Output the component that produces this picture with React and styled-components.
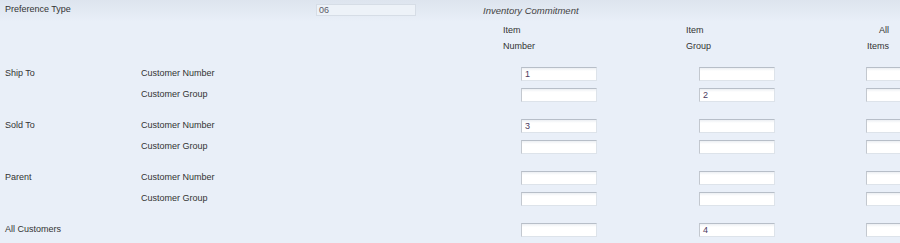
import React from "react";
import styled, { createGlobalStyle } from "styled-components";

const GlobalStyle = createGlobalStyle`
  html, body {
    margin: 0;
    padding: 0;
    background: #e9eff8;
  }
  body {
    font-family: "Liberation Sans", Arial, sans-serif;
    font-size: 9px;
    color: #333333;
  }
`;

const Page = styled.div`
  width: 900px;
  height: 243px;
  overflow: hidden;
  padding-left: 5px;
  box-sizing: border-box;
  background: linear-gradient(#dde4ee 0px, #e9eff8 22px, #e9eff8 100%);
`;

const TopRow = styled.div`
  display: flex;
  align-items: flex-start;
  height: 22px;
`;

const TypeLabel = styled.div`
  width: 311px;
  line-height: 12px;
  margin-top: 3px;
`;

const ReadOnlyBox = styled.div`
  width: 100px;
  height: 12px;
  margin-top: 4px;
  box-sizing: border-box;
  border: 1px solid #d6dde6;
  background: #edf2f8;
  color: #5a5a66;
  line-height: 10px;
  padding-left: 2px;
`;

const Caption = styled.div`
  margin-left: 67px;
  margin-top: 5px;
  line-height: 12px;
  font-size: 9.5px;
  font-style: italic;
  color: #444;
`;

const HeadRow = styled.div`
  display: grid;
  grid-template-columns: 498px 183px 177px 26px;
  margin-bottom: 13px;
`;

const Head = styled.div`
  grid-column: ${({ $col }) => $col};
  line-height: 16px;
  text-align: ${({ $align }) => $align || "left"};
`;

const Group = styled.div`
  display: flex;
  flex-direction: column;
  margin-bottom: 10px;
`;

const Row = styled.div`
  display: grid;
  grid-template-columns: 136px 380px 178px 167px 40px;
  height: 21px;
  align-items: start;
`;

const Label = styled.div`
  line-height: 12px;
`;

const Field = styled.div`
  width: 76px;
  height: 14px;
  box-sizing: border-box;
  border-top: 1px solid #b7bec8;
  border-left: 1px solid #c3c8cf;
  border-right: 1px solid #dde3ea;
  border-bottom: 1px solid #dde3ea;
  background: linear-gradient(#eceff3 0px, #ffffff 3px);
  color: #4c3a5e;
  line-height: 12px;
  padding-left: 3px;
`;

const groups = [
  { name: "Ship To", rows: [["Customer Number", "1", "", ""], ["Customer Group", "", "2", ""]] },
  { name: "Sold To", rows: [["Customer Number", "3", "", ""], ["Customer Group", "", "", ""]] },
  { name: "Parent", rows: [["Customer Number", "", "", ""], ["Customer Group", "", "", ""]] },
  { name: "All Customers", rows: [["", "", "4", ""]] },
];

export default function App() {
  return (
    <>
      <GlobalStyle />
      <Page>
        <TopRow>
          <TypeLabel>Preference Type</TypeLabel>
          <ReadOnlyBox>06</ReadOnlyBox>
          <Caption>Inventory Commitment</Caption>
        </TopRow>
        <HeadRow>
          <Head $col={2}>Item<br />Number</Head>
          <Head $col={3}>Item<br />Group</Head>
          <Head $col={4} $align="right">All<br />Items</Head>
        </HeadRow>
        {groups.map((g) => (
          <Group key={g.name}>
            {g.rows.map((r, i) => (
              <Row key={i}>
                <Label>{i === 0 ? g.name : ""}</Label>
                <Label>{r[0]}</Label>
                <Field>{r[1]}</Field>
                <Field>{r[2]}</Field>
                <Field>{r[3]}</Field>
              </Row>
            ))}
          </Group>
        ))}
      </Page>
    </>
  );
}
